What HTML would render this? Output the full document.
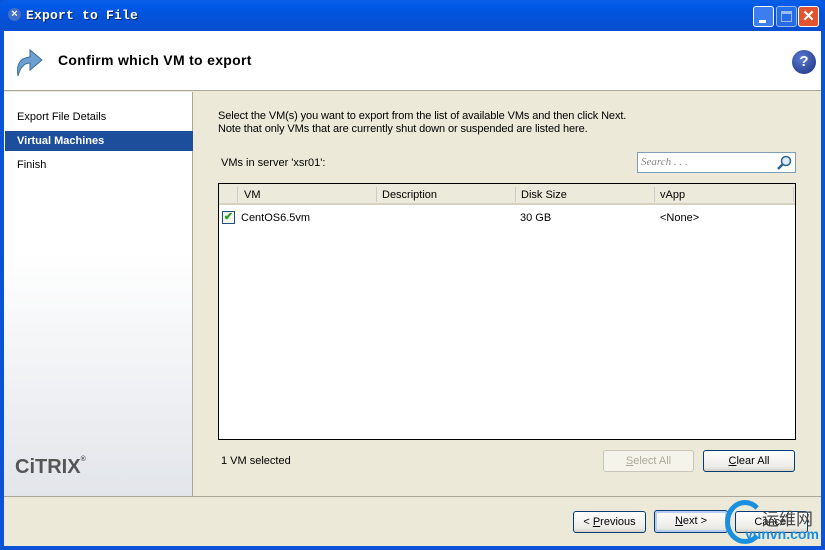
<!DOCTYPE html>
<html><head><style>
*{margin:0;padding:0;box-sizing:border-box}
body{width:825px;height:550px;overflow:hidden;font-family:Tahoma,"Liberation Sans",sans-serif;font-size:11px;color:#000;background:#0a52d6;position:relative}
.a{position:absolute}
.btn{position:absolute;border:1px solid #003c74;border-radius:3px;background:linear-gradient(#fff,#ecebe6 80%,#d6d0c5);text-align:center;line-height:20px;font-size:11px}
</style></head><body>
<div class="a" style="left:0;top:0;width:825px;height:31px;background:linear-gradient(#0a5fe8,#0058e6 20%,#0451d8 60%,#0a4fcf);border-radius:7px 7px 0 0"></div>
<div class="a" style="left:8px;top:8px;width:13px;height:13px;border-radius:50%;background:#3f6fc8;color:#fff;font-size:11px;line-height:13px;text-align:center;font-weight:bold">×</div>
<div class="a" style="left:26px;top:8px;color:#fff;font-family:'Liberation Mono',monospace;font-weight:bold;font-size:13px;letter-spacing:0.2px;text-shadow:1px 1px #0a246a">Export to File</div>
<div class="a" style="left:753px;top:6px;width:21px;height:21px;border:1px solid #fff;border-radius:3px;background:#3c7ef0"><div class="a" style="left:5px;top:13px;width:7px;height:3px;background:#fff"></div></div>
<div class="a" style="left:776px;top:6px;width:21px;height:21px;border:1px solid #fff;border-radius:3px;background:#3c7ef0;opacity:.6"><div class="a" style="left:4px;top:4px;width:11px;height:11px;border:1px solid #fff;border-top-width:3px"></div></div>
<div class="a" style="left:798px;top:6px;width:21px;height:21px;border:1px solid #fff;border-radius:3px;background:#e0552f;color:#fff;font-weight:bold;font-size:15px;line-height:19px;text-align:center">✕</div>
<div class="a" style="left:4px;top:31px;width:817px;height:515px;background:#ece9d8"></div>
<div class="a" style="left:4px;top:31px;width:817px;height:60px;background:#fff;border-bottom:1px solid #aca899"></div>
<svg class="a" style="left:14px;top:44px" width="30" height="34" viewBox="0 0 30 34"><path d="M4 32 C2 20 6 14 16 13 L16 6 L28 16 L16 26 L16 19 C10 19 6 24 4 32Z" fill="#6fa0d0" stroke="#3a6e9e"/></svg>
<div class="a" style="left:58px;top:52px;font-size:14px;font-weight:600;letter-spacing:0.3px">Confirm which VM to export</div>
<div class="a" style="left:792px;top:50px;width:24px;height:24px;border-radius:50%;background:radial-gradient(circle at 40% 35%,#5a7bd0,#1a2f80);color:#fff;font-weight:bold;font-size:15px;line-height:24px;text-align:center">?</div>
<div class="a" style="left:4px;top:92px;width:189px;height:404px;background:linear-gradient(#fff,#fff 40%,#e2e5ea);border-right:1px solid #aca899"></div>
<div class="a" style="left:17px;top:111px">Export File Details</div>
<div class="a" style="left:5px;top:131px;width:188px;height:20px;background:#1c4e9c;color:#fff;font-weight:bold;padding:4px 12px">Virtual Machines</div>
<div class="a" style="left:17px;top:159px">Finish</div>
<div class="a" style="left:15px;top:456px;font-family:'Liberation Sans',sans-serif;font-weight:bold;font-size:20px;color:#555">CiTRIX<span style="font-size:7px;vertical-align:top">®</span></div>
<div class="a" style="left:4px;top:496px;width:817px;height:1px;background:#aca899"></div>
<div class="a" style="left:218px;top:110px;line-height:13px;letter-spacing:-0.1px">Select the VM(s) you want to export from the list of available VMs and then click Next.<br>Note that only VMs that are currently shut down or suspended are listed here.</div>
<div class="a" style="left:221px;top:157px">VMs in server 'xsr01':</div>
<div class="a" style="left:637px;top:152px;width:159px;height:21px;border:1px solid #7f9db9;background:#fff"><span class="a" style="left:3px;top:3px;font-style:italic;color:#888;font-family:'Liberation Serif',serif;font-size:11px">Search . . .</span>
<svg class="a" style="left:138px;top:2px" width="16" height="16"><circle cx="10" cy="6" r="4.5" fill="#dbeefa" stroke="#2d6290" stroke-width="1.5"/><path d="M7 9 L2 14" stroke="#2d6290" stroke-width="2.5"/></svg></div>
<div class="a" style="left:218px;top:183px;width:578px;height:257px;border:1px solid #000;background:#fff"></div>
<div class="a" style="left:219px;top:184px;width:576px;height:21px;background:#ebeadb;border-bottom:2px solid #d6d2c2"></div>
<div class="a" style="left:237px;top:187px;width:1px;height:15px;background:#ccc"></div>
<div class="a" style="left:376px;top:187px;width:1px;height:15px;background:#ccc"></div>
<div class="a" style="left:515px;top:187px;width:1px;height:15px;background:#ccc"></div>
<div class="a" style="left:654px;top:187px;width:1px;height:15px;background:#ccc"></div>
<div class="a" style="left:793px;top:187px;width:1px;height:15px;background:#ccc"></div>
<div class="a" style="left:244px;top:189px">VM</div>
<div class="a" style="left:382px;top:189px">Description</div>
<div class="a" style="left:521px;top:189px">Disk Size</div>
<div class="a" style="left:660px;top:189px">vApp</div>
<div class="a" style="left:222px;top:211px;width:13px;height:13px;border:1px solid #1c5180;background:#f4f4f0;color:#21a121;font-size:11px;line-height:11px;text-align:center;font-weight:bold">✔</div>
<div class="a" style="left:241px;top:212px">CentOS6.5vm</div>
<div class="a" style="left:520px;top:212px">30 GB</div>
<div class="a" style="left:660px;top:212px">&lt;None&gt;</div>
<div class="a" style="left:221px;top:455px">1 VM selected</div>
<div class="btn" style="left:603px;top:450px;width:91px;height:22px;border-color:#c9c7ba;color:#aca899;background:#f5f4ea"><u>S</u>elect All</div>
<div class="btn" style="left:703px;top:450px;width:92px;height:22px"><u>C</u>lear All</div>
<div class="btn" style="left:573px;top:511px;width:73px;height:22px">&lt; <u>P</u>revious</div>
<div class="btn" style="left:654px;top:510px;width:74px;height:23px;border-color:#003c74;box-shadow:inset 0 0 0 2px #b6cef7"><u>N</u>ext &gt;</div>
<div class="btn" style="left:735px;top:511px;width:73px;height:22px">Cancel</div>
<div class="a" style="left:725px;top:500px;width:40px;height:44px;border:5px solid #1a8fe0;border-right-color:transparent;border-radius:50%"></div>
<div class="a" style="left:762px;top:505px;font-family:'Noto Sans CJK SC',sans-serif;font-size:17px;color:#444">运维网</div>
<div class="a" style="left:745px;top:526px;font-weight:bold;font-size:14px;color:#1a8fe0;font-family:'Liberation Sans',sans-serif">yunvn.com</div>
</body></html>
